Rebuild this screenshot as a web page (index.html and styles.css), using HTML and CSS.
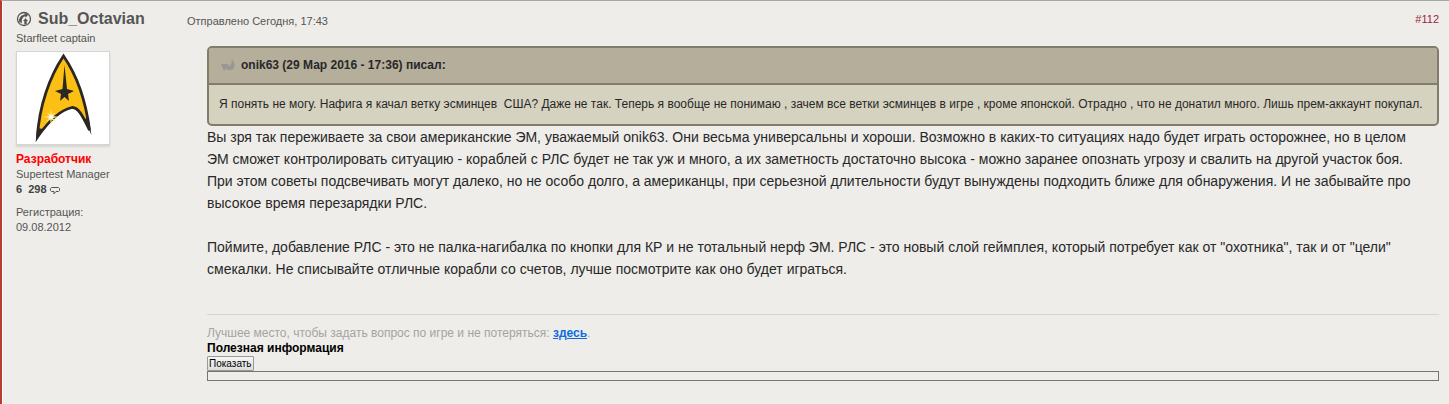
FILE: index.html
```html
<!DOCTYPE html>
<html lang="ru">
<head>
    <meta charset="UTF-8">
    <meta name="viewport" content="width=device-width, initial-scale=1.0">
    <title>Сообщение #112 - Форум</title>
    <link rel="stylesheet" href="styles.css">
</head>
<body>
    <div class="post">
        <div class="author">
            <h3 class="author-name">
                <svg class="author-icon" viewBox="0 0 16 16" width="16" height="16" aria-hidden="true">
                    <circle cx="8" cy="8" r="6.500" fill="none" stroke="#555" stroke-width="1.300"/>
                    <path d="M3 10.500C3 6.500 5 4 9 3.200L8.200 1.800L12.300 3.700L9.500 6.800L9.300 5.200C6.500 5.800 5.500 8 5.800 12.500Z" fill="#555"/>
                    <path d="M8.300 13.500V10H7L9.600 7.200L12 10H10.700V13Z" fill="#555"/>
                </svg>
                <span>Sub_Octavian</span>
            </h3>
            <p class="author-title">Starfleet captain</p>
            <div class="avatar">
                <svg viewBox="0 0 92 92" role="img" aria-label="Sub_Octavian">
                    <path d="M46.500 4C33 24 22 54 20.500 85C31 70 43 58 55 55.500C62 55 67 67 72.500 78C69 51 61 25 46.500 4Z" fill="#fcbf14" stroke="#2a2724" stroke-width="2.800"/>
                    <path d="M18.700 90L20 76L26 77ZM74.500 83L67 67L71.500 66Z" fill="#2a2724"/>
                    <path d="M47.500 13L50 37L57 39L51 42L52 49L47.500 45L43 49L44 42L38 39L45.500 37Z" fill="#2a2724"/>
                    <path d="M34 57L34.800 62.500L38 60.500L36 64L42 65L36 66L39 70L34.800 67.500L34 73L33.200 67.500L29 70L32 66L26 65L32 64L30 60.500L33.200 62.500Z" fill="#ffe68a"/>
                    <circle cx="34" cy="65" r="2" fill="#fff"/>
                </svg>
            </div>
            <p class="author-group">Разработчик</p>
            <p>Supertest Manager</p>
            <p class="author-posts">
                6&nbsp; 298
                <svg viewBox="0 0 10 9" width="10" height="9" aria-hidden="true">
                    <path d="M1.500 1.500H8.500L9.500 2.500V4.500L8.500 5.500H6L4 7.800V5.500H1.500L0.500 4.500V2.500Z" fill="none" stroke="#555" stroke-width="1"/>
                </svg>
            </p>
            <p class="author-joined">Регистрация:<br>09.08.2012</p>
        </div>

        <div class="post-body">
            <div class="post-info">
                <span>Отправлено Сегодня, 17:43</span>
                <a href="#post112" class="post-number">#112</a>
            </div>

            <div class="post-content" id="post112">
                <blockquote class="quote">
                    <div class="quote-header">
                        <svg viewBox="0 0 14 12" width="14" height="12" aria-hidden="true">
                            <path d="M0 5H8L6.500 7C9.500 7.500 11.500 5 10.500 0C13.500 3 14.500 7 12.500 9.500C10.500 12 7 11.500 5 9.500L3 12Z" fill="#999697"/>
                        </svg>
                        <span>onik63 (29 Мар 2016 - 17:36) писал:</span>
                    </div>
                    <p class="quote-text">Я понять не могу. Нафига я качал ветку эсминцев&nbsp; США? Даже не так. Теперь я вообще не понимаю , зачем все ветки эсминцев в игре , кроме японской. Отрадно , что не донатил много. Лишь прем-аккаунт покупал.</p>
                </blockquote>
                <p class="text">Вы зря так переживаете за свои американские ЭМ, уважаемый onik63. Они весьма универсальны и хороши. Возможно в каких-то ситуациях надо будет играть осторожнее, но в целом ЭМ сможет контролировать ситуацию - кораблей с РЛС будет не так уж и много, а их заметность достаточно высока - можно заранее опознать угрозу и свалить на другой участок боя. При этом советы подсвечивать могут далеко, но не особо долго, а американцы, при серьезной длительности будут вынуждены подходить ближе для обнаружения. И не забывайте про высокое время перезарядки РЛС.</p>
                <p class="text">Поймите, добавление РЛС - это не палка-нагибалка по кнопки для КР и не тотальный нерф ЭМ. РЛС - это новый слой геймплея, который потребует как от "охотника", так и от "цели" смекалки. Не списывайте отличные корабли со счетов, лучше посмотрите как оно будет играться.</p>
            </div>

            <div class="signature">
                <p>Лучшее место, чтобы задать вопрос по игре и не потеряться: <a href="#">здесь</a>.</p>
                <p class="spoiler-title">Полезная информация</p>
                <button type="button" class="spoiler-btn">Показать</button>
                <div class="spoiler"></div>
            </div>
        </div>
    </div>
</body>
</html>
```
FILE: styles.css
```css
* {
    box-sizing: border-box;
}
body {
    margin: 0;
    font-family: "Liberation Sans", Arial, sans-serif;
    font-size: 11px;
    line-height: 15px;
    color: #555;
    background-color: #eeede9;
}
p, h3, blockquote {
    margin: 0;
}
.post {
    display: flex;
    min-height: 100vh;
    border-top: 1px solid #aaa7a7;
    border-left: 2px solid #b83b2c;
}
.author {
    flex: 0 0 185px;
    padding: 8px 13px;
    border-left: 1px solid #fff;
}
.author-name {
    display: flex;
    align-items: center;
    gap: 6px;
    font-size: 16px;
    line-height: 20px;
}
.author-icon {
    flex: none;
}
.author-title {
    margin-top: 2px;
}
.avatar {
    width: 94px;
    height: 94px;
    margin: 5px 0 7px;
    background: white;
    border: 1px solid #d5d5d5;
    box-shadow: 0 2px 2px rgba(0,0,0,0.1);
}
.avatar svg {
    display: block;
}
.author-group {
    font-size: 12px;
    font-weight: bold;
    color: #f00;
}
.author-posts {
    font-weight: bold;
    color: #444;
}
.author-posts svg {
    vertical-align: -2px;
}
.author-joined {
    margin-top: 8px;
}
.post-body {
    flex: 1;
    min-width: 0;
    padding: 10px 10px 20px 0;
}
.post-info {
    display: flex;
    justify-content: space-between;
    line-height: 20px;
}
.post-number {
    line-height: 16px;
    color: #9c2442;
    text-decoration: none;
}
.post-content {
    margin: 15px 0 0 20px;
    font-size: 14px;
    line-height: 22px;
    color: #282828;
}
.quote {
    font-size: 12px;
    background: #d6d2c0;
    border: 2px solid #827d6a;
    border-radius: 5px;
}
.quote-header {
    display: flex;
    align-items: center;
    gap: 6px;
    padding: 6px 12px 7px;
    font-weight: bold;
    background: #b5ae9b;
    border-bottom: 2px solid #827d6a;
    border-radius: 3px 3px 0 0;
}
.quote-text {
    padding: 8px 10px 9px;
}
.text {
    padding-right: 12px;
}
.text + .text {
    margin-top: 22px;
}
.signature {
    margin: 34px 0 0 20px;
    padding-top: 11px;
    border-top: 1px solid #d5d5d5;
    font-size: 12px;
    color: #a4a4a4;
}
.signature a {
    font-weight: bold;
    color: #0f6be0;
}
.spoiler-title {
    font-weight: bold;
    color: #000;
}
.spoiler-btn {
    display: block;
    height: 15px;
    padding: 0 1px;
    font-family: inherit;
    font-size: 10px;
    line-height: 13px;
    color: #000;
    background: linear-gradient(#f6f6f6, #ddd);
    border: 1px solid #999;
    border-radius: 1px;
}
.spoiler {
    height: 10px;
    border: 1px solid #777570;
}
```
